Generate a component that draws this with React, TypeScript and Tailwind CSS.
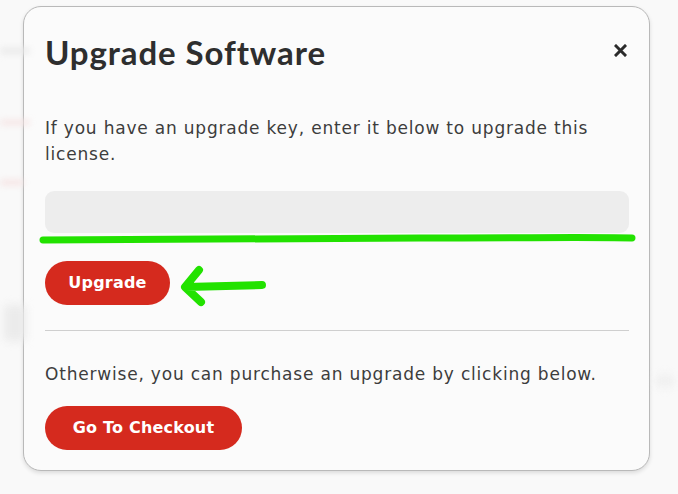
import React from 'react'

function Annotations() {
  return (
    <svg
      className="pointer-events-none absolute left-0 top-0"
      width="678"
      height="494"
      viewBox="0 0 678 494"
      fill="none"
      aria-hidden="true"
    >
      <path
        d="M43 240 C 180 239, 300 238, 420 238 S 580 237, 632 238"
        stroke="#22e200"
        strokeWidth="7"
        strokeLinecap="round"
      />
      <path
        d="M262 285 L 186 287 M 199 270 L 185 287 L 201 302"
        stroke="#22e200"
        strokeWidth="8"
        strokeLinecap="round"
        strokeLinejoin="round"
      />
    </svg>
  )
}

const body = { fontFamily: '"DejaVu Sans", "Noto Sans", sans-serif' }

export default function App() {
  return (
    <div className="relative h-[494px] w-[678px] overflow-hidden bg-[#f9f9f9]">
      {/* blurred page behind the dialog */}
      <div className="absolute left-0 top-[48px] h-[6px] w-[30px] rounded bg-[#e9e9e9] blur-[3px]" />
      <div className="absolute left-0 top-[120px] h-[5px] w-[30px] rounded bg-[#f6e4e4] blur-[3px]" />
      <div className="absolute left-0 top-[180px] h-[5px] w-[24px] rounded bg-[#f6e2e2] blur-[3px]" />
      <div className="absolute left-[4px] top-[305px] h-[36px] w-[22px] rounded bg-[#ebebeb] blur-[4px]" />
      <div className="absolute right-[4px] top-[375px] h-[12px] w-[18px] rounded bg-[#efefef] blur-[4px]" />

      <div className="ml-[23px] mt-[6px] flex h-[465px] w-[627px] flex-col rounded-[18px] border border-[#b9b9b9] bg-[#fbfbfb] px-[21px] shadow-[0_2px_4px_rgba(0,0,0,0.12)]">
        <div className="flex items-center justify-between pt-[25px]">
          <h1
            className="text-[33px] font-bold leading-[40px] tracking-[0.9px] text-[#2e2e2e]"
            style={{ fontFamily: 'Lato, "Open Sans", sans-serif' }}
          >
            Upgrade Software
          </h1>
          <button className="-mt-[4px] mr-[-2px] flex h-[20px] w-[20px] items-center justify-center" aria-label="Close">
            <svg width="13" height="13" viewBox="0 0 13 13">
              <path d="M2 2 L11 11 M11 2 L2 11" stroke="#2b2b2b" strokeWidth="3" strokeLinecap="square" />
            </svg>
          </button>
        </div>

        <div style={body}>
          <p className="mt-[43px] w-[580px] text-[17px] leading-[26px] tracking-[0.8px] text-[#3d3d3d]">
            If you have an upgrade key, enter it below to upgrade this license.
          </p>

          <input
            className="mt-[24px] block h-[42px] w-[584px] rounded-[9px] bg-[#ededed] px-3 outline-none"
            aria-label="Upgrade key"
          />

          <button className="mt-[28px] h-[44px] w-[125px] rounded-full bg-[#d52a1e] text-[16px] font-bold tracking-[0.2px] text-white">
            Upgrade
          </button>

          <div className="mt-[25px] h-px w-[584px] bg-[#cfcfcf]" />

          <p className="mt-[30px] text-[17px] leading-[26px] tracking-[0.8px] text-[#3d3d3d]">
            Otherwise, you can purchase an upgrade by clicking below.
          </p>

          <button className="mt-[19px] h-[44px] w-[197px] rounded-full bg-[#d52a1e] text-[16px] font-bold tracking-[0.2px] text-white">
            Go To Checkout
          </button>
        </div>
      </div>

      <Annotations />
    </div>
  )
}
